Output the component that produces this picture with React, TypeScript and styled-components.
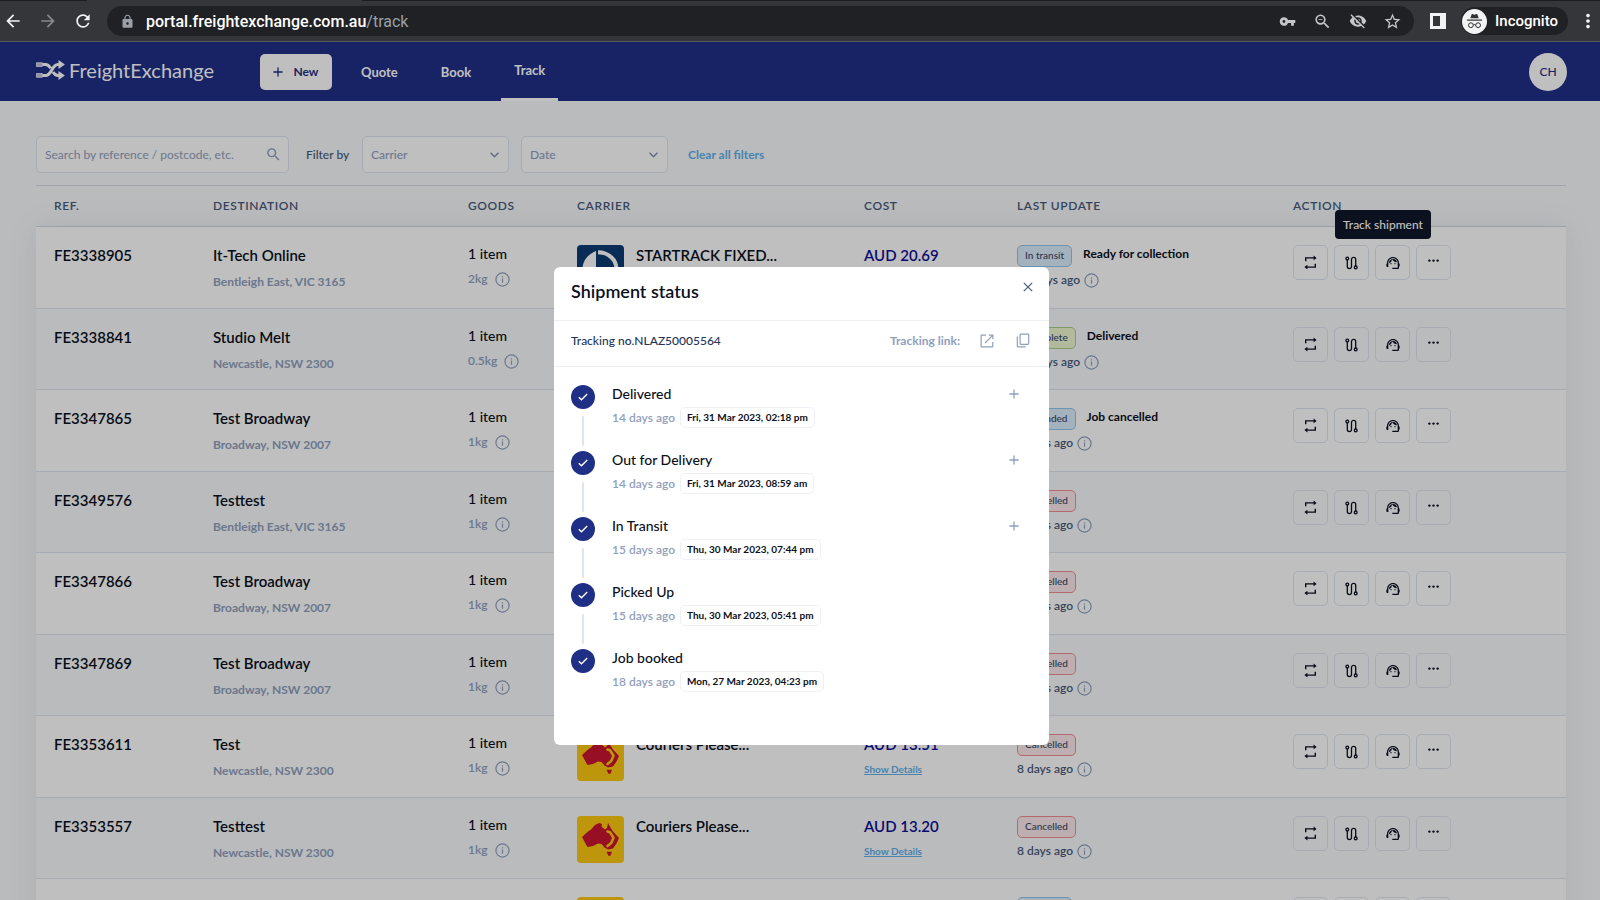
import React from "react";
import styled, { createGlobalStyle, css } from "styled-components";
import {
  MdArrowBack,
  MdArrowForward,
  MdRefresh,
  MdLock,
  MdVpnKey,
  MdZoomOut,
  MdVisibilityOff,
  MdStarBorder,
  MdMoreVert,
  MdSearch,
  MdSupportAgent,
} from "react-icons/md";

const ink = "#0b1020";
const slate = "#475a7a";
const muted = "#8fa0bd";
const line = "#dfe5ef";
const brand = "#1f2f86";
const sky = "#62b0ea";

const GlobalStyle = createGlobalStyle`
  *, *::before, *::after { box-sizing: border-box; }
  body { margin: 0; background: #f8fafc; font-family: Lato, "Liberation Sans", sans-serif; color: ${ink}; }
  button, input, select { font: inherit; color: inherit; }
  button { cursor: pointer; }
  h1, p, ol, dl { margin: 0; padding: 0; }
`;

const Window = styled.div`
  display: flex;
  flex-direction: column;
  height: 100vh;
  overflow: hidden;
`;

/* ---------- browser bar ---------- */

const BrowserBar = styled.header`
  flex: none;
  background: #35363a;
  border-bottom: 1px solid #55585b;
`;

const TabStrip = styled.div`
  height: 1px;
  padding-left: 87px;
  background: #1c1d20;
`;

const ActiveTab = styled.div`
  width: 275px;
  height: 1px;
  background: #35363a;
`;

const BrowserRow = styled.div`
  display: flex;
  align-items: center;
  height: 40px;
  padding-left: 3px;
  font-family: Roboto, "Liberation Sans", sans-serif;
`;

const BarButton = styled.button<{ $tone?: string; $w?: number }>`
  display: flex;
  align-items: center;
  justify-content: center;
  width: ${(p) => p.$w ?? 35}px;
  height: 28px;
  padding: 0;
  border: 0;
  background: none;
  color: ${(p) => p.$tone ?? "#f1f3f4"};
`;

const NavButtons = styled.div`
  display: flex;
  gap: 15px;
  padding-right: 14px;
`;

const Omnibox = styled.div`
  display: flex;
  flex: 1;
  align-items: center;
  height: 30px;
  padding: 0 4px 0 13px;
  border-radius: 15px;
  background: #202124;
  color: #9aa0a6;
`;

const Address = styled.input`
  flex: 1;
  min-width: 0;
  border: 0;
  outline: 0;
  background: none;
`;

const UrlText = styled.a`
  flex: 1;
  padding-left: 11px;
  font-size: 16px;
  color: #9aa0a6;
  text-decoration: none;
  b { font-weight: 500; color: #fff; }
`;

const IncognitoChip = styled.button`
  display: flex;
  align-items: center;
  gap: 8px;
  height: 28px;
  margin-right: 8px;
  padding: 0 10px 0 1px;
  border: 0;
  border-radius: 14px;
  background: #202124;
  color: #fff;
  font-size: 15px;
  font-weight: 500;
`;

/* ---------- portal ---------- */

const Portal = styled.div`
  position: relative;
  flex: 1;
  min-height: 0;
  overflow: hidden;
`;

const TopNav = styled.nav`
  display: flex;
  align-items: center;
  height: 59px;
  padding: 0 33px 0 36px;
  background: ${brand};
  color: #fff;
`;

const Logo = styled.a`
  display: flex;
  align-items: center;
  gap: 4px;
  width: 224px;
  padding-bottom: 4px;
  color: #fff;
  font-size: 20px;
  line-height: 24px;
  text-decoration: none;
`;

const NewButton = styled.button`
  display: flex;
  align-items: center;
  justify-content: center;
  gap: 10px;
  width: 72px;
  height: 36px;
  padding: 0;
  border: 0;
  border-radius: 5px;
  background: #fff;
  color: ${brand};
  font-size: 12px;
  font-weight: 700;
`;

const NavLinks = styled.div`
  display: flex;
  align-self: stretch;
  flex: 1;
  gap: 17px;
  padding-left: 16px;
`;

const NavLink = styled.a<{ $active?: boolean }>`
  display: flex;
  align-items: center;
  padding: 0 13px;
  color: #fff;
  font-size: 13px;
  font-weight: 700;
  text-decoration: none;
  ${(p) => p.$active && css`border-bottom: 3px solid #fff;`}
`;

const Avatar = styled.button`
  width: 38px;
  height: 38px;
  padding: 0;
  border: 0;
  border-radius: 50%;
  background: #fff;
  color: ${brand};
  font-size: 12px;
  font-weight: 500;
`;

const Page = styled.main`
  padding: 35px 34px 0 36px;
`;

const Filters = styled.form`
  display: flex;
  align-items: center;
  height: 37px;
  margin-bottom: 12px;
  font-size: 12px;
  font-weight: 500;
`;

const field = css`
  height: 37px;
  border: 1px solid ${line};
  border-radius: 5px;
  background: #fff;
  color: ${muted};
`;

const SearchField = styled.label`
  ${field}
  display: flex;
  align-items: center;
  width: 253px;
  padding: 0 6px 0 8px;
`;

const SearchInput = styled(Address)`
  padding: 0;
  font-weight: 400;
  &::placeholder { color: ${muted}; opacity: 1; }
`;

const FilterLabel = styled.label`
  width: 73px;
  padding-left: 17px;
  color: ${slate};
`;

const SelectWrap = styled.div`
  display: grid;
  align-items: center;
  width: 147px;
  margin-right: 12px;
  > * { grid-area: 1 / 1; }
  > svg { justify-self: end; margin-right: 10px; pointer-events: none; }
`;

const Select = styled.select`
  ${field}
  width: 100%;
  padding: 0 8px;
  appearance: none;
`;

const ClearButton = styled.button`
  padding: 0 8px;
  border: 0;
  background: none;
  color: ${sky};
  font-weight: 700;
`;

const Table = styled.table`
  width: 100%;
  table-layout: fixed;
  border-collapse: separate;
  border-spacing: 0;
`;

const HeadCell = styled.th`
  height: 42px;
  padding: 0 0 2px;
  border-top: 1px solid #d5dbe6;
  border-bottom: 1px solid #d5dbe6;
  color: ${slate};
  font-size: 12px;
  font-weight: 600;
  letter-spacing: 0.05em;
  text-align: left;
  &:first-child { padding-left: 18px; }
`;

const Body = styled.tbody`
  box-shadow: 0 0 30px rgba(30, 50, 90, 0.09);
`;

const Row = styled.tr`
  height: 82px;
  background: #fff;
  &:nth-child(even) { height: 81px; background: #f8fafc; }
`;

const Cell = styled.td`
  padding: 18px 0 0;
  border-bottom: 1px solid ${line};
  vertical-align: top;
  &:first-child { padding-left: 18px; }
`;

const Strong = styled.div<{ $tone?: string }>`
  color: ${(p) => p.$tone ?? ink};
  font-size: 15px;
  font-weight: 600;
  line-height: 21px;
`;

const Sub = styled.div`
  padding-top: 6px;
  color: ${muted};
  font-size: 12px;
  font-weight: 700;
  line-height: 20px;
`;

const ItemCount = styled.div`
  padding-bottom: 6px;
  font-size: 14px;
  font-weight: 500;
  line-height: 18px;
`;

const Meta = styled.div<{ $tone: string; $gap: number }>`
  display: flex;
  align-items: center;
  gap: ${(p) => p.$gap}px;
  color: ${(p) => p.$tone};
  font-size: 12px;
  font-weight: 600;
  line-height: 20px;
  svg { color: ${muted}; }
`;

const CarrierLine = styled.div`
  display: flex;
  gap: 12px;
`;

const DetailsLink = styled.a`
  display: inline-block;
  padding-top: 4px;
  color: ${sky};
  font-size: 10px;
  font-weight: 700;
  line-height: 20px;
`;

const tones = {
  blue: ["#dbeefc", "#90c4ee"],
  green: ["#eef7d2", "#a9cf8a"],
  red: ["#fdeaec", "#f08c90"],
};

type Tone = keyof typeof tones;

const StatusLine = styled.div`
  display: flex;
  gap: 11px;
  height: 22px;
  margin-bottom: 3px;
  font-size: 12px;
  font-weight: 700;
  line-height: 18px;
`;

const Badge = styled.span<{ $tone: Tone }>`
  height: 22px;
  padding: 0 7px;
  border: 1px solid ${(p) => tones[p.$tone][1]};
  border-radius: 5px;
  background: ${(p) => tones[p.$tone][0]};
  color: #3a4968;
  font-size: 10px;
  font-weight: 500;
  line-height: 19px;
`;

const Actions = styled.div`
  display: flex;
  gap: 6px;
`;

const ActionButton = styled.button`
  position: relative;
  display: flex;
  align-items: center;
  justify-content: center;
  width: 35px;
  height: 35px;
  padding: 0;
  border: 1px solid ${line};
  border-radius: 5px;
  background: none;
  color: ${ink};
`;

const Tooltip = styled.span`
  position: absolute;
  bottom: 40px;
  left: 0;
  padding: 0 8px;
  border-radius: 4px;
  background: #0f172a;
  color: #fff;
  font-size: 12px;
  font-weight: 500;
  line-height: 29px;
  white-space: nowrap;
`;

/* ---------- dialog ---------- */

const Overlay = styled.div`
  position: absolute;
  inset: 0;
  display: flex;
  align-items: flex-start;
  justify-content: center;
  padding: 225px 0 0 3px;
  background: rgba(0, 0, 0, 0.25);
`;

const Dialog = styled.section`
  width: 495px;
  padding-bottom: 30px;
  border-radius: 6px;
  background: #fff;
`;

const DialogHead = styled.div`
  display: flex;
  align-items: center;
  justify-content: space-between;
  height: 54px;
  padding: 0 12px 6px 17px;
  border-bottom: 1px solid #edf1f6;
`;

const DialogTitle = styled.h1`
  font-size: 18px;
  font-weight: 600;
  line-height: 24px;
`;

const IconButton = styled.button`
  display: flex;
  align-items: center;
  justify-content: center;
  width: 18px;
  height: 18px;
  padding: 0;
  border: 0;
  background: none;
  color: ${muted};
`;

const CloseButton = styled(IconButton)`
  align-self: flex-start;
  margin-top: 11px;
  color: ${slate};
`;

const TrackingLine = styled.div`
  display: flex;
  align-items: center;
  gap: 18px;
  height: 46px;
  padding: 0 17px 6px;
  border-bottom: 1px solid #edf1f6;
  color: ${muted};
  font-size: 12px;
  font-weight: 700;
`;

const TrackingNo = styled.p`
  flex: 1;
  color: #243456;
  font-weight: 500;
`;

const Steps = styled.ol`
  padding: 18px 26px 0 17px;
  list-style: none;
`;

const Step = styled.li`
  display: flex;
  height: 66px;
  gap: 17px;
`;

const Rail = styled.div`
  display: flex;
  flex-direction: column;
  align-items: center;
  gap: 7px;
  width: 24px;
`;

const Dot = styled.span`
  display: flex;
  align-items: center;
  justify-content: center;
  width: 24px;
  height: 24px;
  border-radius: 50%;
  background: ${brand};
  color: #fff;
`;

const Connector = styled.span`
  width: 2px;
  height: 30px;
  border-radius: 1px;
  background: #dfe4f0;
`;

const StepText = styled.div`
  flex: 1;
`;

const StepTitle = styled.p`
  font-size: 14px;
  font-weight: 500;
  line-height: 18px;
`;

const StepTime = styled.p`
  display: flex;
  align-items: center;
  gap: 5px;
  padding-top: 4px;
  color: ${muted};
  font-size: 12px;
  font-weight: 600;
`;

const Stamp = styled.time`
  padding: 0 6px;
  border: 1px solid #edf1f6;
  border-radius: 5px;
  color: ${ink};
  font-size: 10px;
  font-weight: 700;
  line-height: 19px;
`;

/* ---------- icons ---------- */

const InfoIcon = () => (
  <svg width="15" height="15" viewBox="0 0 15 15" fill="none" stroke="currentColor" aria-hidden="true">
    <circle cx="7.500" cy="7.500" r="6.600" strokeWidth="1.200" />
    <path d="M7.500 6.600V10.800M7.500 4.200v1.200" strokeWidth="1.200" />
  </svg>
);

const PlusIcon = ({ size }: { size: number }) => (
  <svg width={size} height={size} viewBox="0 0 10 10" fill="none" stroke="currentColor" strokeWidth="1.3" aria-hidden="true">
    <path d="M5 .4v9.2M.4 5h9.2" />
  </svg>
);

const Chevron = () => (
  <svg width="9" height="6" viewBox="0 0 9 6" fill="none" stroke="#8090ac" strokeWidth="1.4" aria-hidden="true">
    <path d="M.6.7 4.5 4.8 8.4.7" />
  </svg>
);

const SwapIcon = () => (
  <svg width="13" height="15" viewBox="0 0 13 15" fill="none" stroke="currentColor" strokeWidth="1.4" aria-hidden="true">
    <path d="M1.700 6.200V2.900H10M11.300 8.800v3.300H3" />
    <path d="M9.600.600 12.600 2.900 9.600 5.200ZM3.400 9.800.4 12.100 3.400 14.400Z" fill="currentColor" stroke="none" />
  </svg>
);

const RouteIcon = () => (
  <svg width="13" height="14" viewBox="0 0 13 14" fill="none" stroke="currentColor" strokeWidth="1.3" aria-hidden="true">
    <circle cx="2.3" cy="2.6" r="1.4" />
    <circle cx="10.7" cy="11.4" r="1.4" />
    <path d="M2.3 4v6.500a2.100 2.100 0 0 0 4.200 0V3.500a2.100 2.100 0 0 1 4.200 0v6.500" />
  </svg>
);

const DotsIcon = () => (
  <svg width="11" height="7" viewBox="0 0 11 7" fill="currentColor" aria-hidden="true">
    <circle cx="1.4" cy="1.6" r="1.2" />
    <circle cx="5.5" cy="1.6" r="1.2" />
    <circle cx="9.6" cy="1.6" r="1.2" />
  </svg>
);

const CheckIcon = () => (
  <svg width="10" height="8" viewBox="0 0 10 8" fill="none" stroke="currentColor" strokeWidth="1.4" aria-hidden="true">
    <path d="M.8 4.2 3.5 6.8 9.2 1" />
  </svg>
);

const CloseIcon = () => (
  <svg width="10" height="10" viewBox="0 0 10 10" fill="none" stroke="currentColor" strokeWidth="1.2" aria-hidden="true">
    <path d="m.8.8 8.4 8.4M9.2.8.8 9.2" />
  </svg>
);

const OpenIcon = () => (
  <svg width="14" height="14" viewBox="0 0 14 14" fill="none" stroke="currentColor" strokeWidth="1.2" aria-hidden="true">
    <path d="M6 1.2H1.6a.5.5 0 0 0-.5.5v10.7c0 .3.2.5.5.5h10.7c.3 0 .5-.2.5-.5V8" />
    <path d="M8.8 1.1h4.1v4.1M12.7 1.3 5 9" />
  </svg>
);

const CopyIcon = () => (
  <svg width="14" height="15" viewBox="0 0 14 15" fill="none" stroke="currentColor" strokeWidth="1.2" aria-hidden="true">
    <rect x="4.1" y="1.1" width="8.6" height="10.2" rx=".8" />
    <path d="M1.3 3.6v9.3c0 .6.4 1 1 1h7.4" />
  </svg>
);

const BrandMark = () => (
  <svg width="29" height="20" viewBox="0 0 29 20" fill="none" stroke="currentColor" aria-hidden="true">
    <path d="M.4 2.800h6v3.600h-6zM.4 13.600h6v3.600h-6z" fill="currentColor" fillOpacity=".7" strokeWidth=".8" />
    <path d="M6.500 4.500h3c2.600 0 3.800 1.600 5.200 3.800M17 12c1.200 2 2.600 3.500 5 3.500h2M6.500 15.500h3c6.600 0 6-11 12.500-11h2" strokeWidth="3" />
    <path d="M22.500 0 28.900 4.500 22.500 9ZM22.500 11 28.900 15.500 22.500 20Z" fill="currentColor" stroke="none" />
  </svg>
);

const SidePanelIcon = () => (
  <svg width="16" height="16" viewBox="0 0 16 16" aria-hidden="true">
    <path fill="#f1f3f4" fillRule="evenodd" d="M0 0h16v16H0zM3 3v10h7V3z" />
  </svg>
);

const IncognitoIcon = () => (
  <svg width="25" height="25" viewBox="0 0 25 25" aria-hidden="true">
    <circle cx="12.500" cy="12.500" r="12.500" fill="#f1f3f4" />
    <path d="M8.300 9.300 9.600 5.600c.2-.5.6-.6 1-.5l1.900.6 1.900-.6c.4-.1.900 0 1 .5l1.300 3.700Z" fill="#303134" />
    <path d="M5 11.100h15" stroke="#303134" strokeWidth="1.200" />
    <g fill="none" stroke="#303134" strokeWidth="1">
      <circle cx="8.900" cy="16.200" r="2.400" />
      <circle cx="16.100" cy="16.200" r="2.400" />
      <path d="M11.300 16c.8-.5 1.600-.5 2.400 0" />
    </g>
  </svg>
);

const StarTrackLogo = () => (
  <svg width="47" height="47" viewBox="0 0 47 47" role="img" aria-label="StarTrack">
    <rect width="47" height="47" rx="4" fill="#0d3b73" />
    <path d="M19 6v35C11 38 5.500 31 5.500 23.500S11 9 19 6Z" fill="#fff" />
    <path d="M21 7.300c11 0 18.300 8 18.300 16.200S32 39.700 21 39.700" fill="none" stroke="#fff" strokeWidth="4" />
  </svg>
);

const CouriersPleaseLogo = () => (
  <svg width="47" height="47" viewBox="0 0 47 47" role="img" aria-label="Couriers Please">
    <rect width="47" height="47" rx="4" fill="#fdc90f" />
    <path
      d="M5 21 11 15.500 14 13.500 18 9 22 7 25 8 24.500 10.500 28 13.500 30 12 31 7 33.500 11.500 36 15.500 42 22 39.500 27.500 36 32.500 31 33.500 27.500 31.500 24.500 28 21 27.500 16 30 10.500 31 8.500 27.500Z"
      fill="#c91430"
    />
    <path d="m30.500 15.500 2.500.8 3.500 5.500-2.300 5.200-3.700 3" fill="none" stroke="#fdc90f" strokeWidth="2.600" strokeLinecap="round" strokeLinejoin="round" />
    <path d="M29.500 35.800h5.500l-1.600 4h-2Z" fill="#c91430" />
  </svg>
);

/* ---------- data ---------- */

interface Shipment {
  ref: string;
  name: string;
  place: string;
  weight: string;
  carrier: string;
  cost: string;
  status: string;
  tone: Tone;
  note?: string;
  updated: string;
}

const couriers = "Couriers Please...";

const shipments: Shipment[] = [
  { ref: "FE3338905", name: "It-Tech Online", place: "Bentleigh East, VIC 3165", weight: "2kg", carrier: "STARTRACK FIXED...", cost: "20.69", status: "In transit", tone: "blue", note: "Ready for collection", updated: "14 days ago" },
  { ref: "FE3338841", name: "Studio Melt", place: "Newcastle, NSW 2300", weight: "0.5kg", carrier: couriers, cost: "13.20", status: "Complete", tone: "green", note: "Delivered", updated: "14 days ago" },
  { ref: "FE3347865", name: "Test Broadway", place: "Broadway, NSW 2007", weight: "1kg", carrier: couriers, cost: "13.20", status: "Amended", tone: "blue", note: "Job cancelled", updated: "9 days ago" },
  { ref: "FE3349576", name: "Testtest", place: "Bentleigh East, VIC 3165", weight: "1kg", carrier: couriers, cost: "13.20", status: "Cancelled", tone: "red", updated: "9 days ago" },
  { ref: "FE3347866", name: "Test Broadway", place: "Broadway, NSW 2007", weight: "1kg", carrier: couriers, cost: "13.20", status: "Cancelled", tone: "red", updated: "9 days ago" },
  { ref: "FE3347869", name: "Test Broadway", place: "Broadway, NSW 2007", weight: "1kg", carrier: couriers, cost: "13.20", status: "Cancelled", tone: "red", updated: "9 days ago" },
  { ref: "FE3353611", name: "Test", place: "Newcastle, NSW 2300", weight: "1kg", carrier: couriers, cost: "13.51", status: "Cancelled", tone: "red", updated: "8 days ago" },
  { ref: "FE3353557", name: "Testtest", place: "Newcastle, NSW 2300", weight: "1kg", carrier: couriers, cost: "13.20", status: "Cancelled", tone: "red", updated: "8 days ago" },
  { ref: "FE3353540", name: "Testtest", place: "Newcastle, NSW 2300", weight: "1kg", carrier: couriers, cost: "13.20", status: "In transit", tone: "blue", updated: "8 days ago" },
];

const steps = [
  { title: "Delivered", ago: "14 days ago", stamp: "Fri, 31 Mar 2023, 02:18 pm", more: true },
  { title: "Out for Delivery", ago: "14 days ago", stamp: "Fri, 31 Mar 2023, 08:59 am", more: true },
  { title: "In Transit", ago: "15 days ago", stamp: "Thu, 30 Mar 2023, 07:44 pm", more: true },
  { title: "Picked Up", ago: "15 days ago", stamp: "Thu, 30 Mar 2023, 05:41 pm", more: false },
  { title: "Job booked", ago: "18 days ago", stamp: "Mon, 27 Mar 2023, 04:23 pm", more: false },
];

const columns: [string, number | undefined][] = [
  ["REF.", 177],
  ["DESTINATION", 255],
  ["GOODS", 109],
  ["CARRIER", 287],
  ["COST", 153],
  ["LAST UPDATE", 276],
  ["ACTION", undefined],
];

const Column = styled.col<{ $w?: number }>`
  width: ${(p) => (p.$w ? `${p.$w}px` : "auto")};
`;

function ShipmentRow({ s, tip }: { s: Shipment; tip: boolean }) {
  return (
    <Row>
      <Cell><Strong>{s.ref}</Strong></Cell>
      <Cell>
        <Strong>{s.name}</Strong>
        <Sub>{s.place}</Sub>
      </Cell>
      <Cell>
        <ItemCount>1 item</ItemCount>
        <Meta $tone={muted} $gap={7}>{s.weight}<InfoIcon /></Meta>
      </Cell>
      <Cell>
        <CarrierLine>
          {s.carrier === couriers ? <CouriersPleaseLogo /> : <StarTrackLogo />}
          <Strong>{s.carrier}</Strong>
        </CarrierLine>
      </Cell>
      <Cell>
        <Strong $tone="#0f0f94">AUD {s.cost}</Strong>
        <DetailsLink href="#details">Show Details</DetailsLink>
      </Cell>
      <Cell>
        <StatusLine>
          <Badge $tone={s.tone}>{s.status}</Badge>
          {s.note}
        </StatusLine>
        <Meta $tone={slate} $gap={4}>{s.updated}<InfoIcon /></Meta>
      </Cell>
      <Cell>
        <Actions>
          <ActionButton aria-label="Rebook"><SwapIcon /></ActionButton>
          <ActionButton aria-label="Track shipment">
            <RouteIcon />
            {tip && <Tooltip role="tooltip">Track shipment</Tooltip>}
          </ActionButton>
          <ActionButton aria-label="Support"><MdSupportAgent size={16} /></ActionButton>
          <ActionButton aria-label="More"><DotsIcon /></ActionButton>
        </Actions>
      </Cell>
    </Row>
  );
}

export default function App() {
  return (
    <Window>
      <GlobalStyle />
      <BrowserBar>
        <TabStrip><ActiveTab /></TabStrip>
        <BrowserRow>
          <NavButtons>
            <BarButton $w={20} aria-label="Back"><MdArrowBack size={20} /></BarButton>
            <BarButton $w={20} $tone="#87898c" aria-label="Forward"><MdArrowForward size={20} /></BarButton>
            <BarButton $w={20} aria-label="Reload"><MdRefresh size={22} /></BarButton>
          </NavButtons>
          <Omnibox>
            <MdLock size={15} />
            <UrlText href="#track"><b>portal.freightexchange.com.au</b>/track</UrlText>
            <BarButton $tone="#c4c7ca" aria-label="Passwords"><MdVpnKey size={17} /></BarButton>
            <BarButton $tone="#c4c7ca" aria-label="Zoom"><MdZoomOut size={19} /></BarButton>
            <BarButton $tone="#c4c7ca" aria-label="Cookies blocked"><MdVisibilityOff size={18} /></BarButton>
            <BarButton $tone="#c4c7ca" aria-label="Bookmark"><MdStarBorder size={19} /></BarButton>
          </Omnibox>
          <BarButton $w={47} aria-label="Side panel"><SidePanelIcon /></BarButton>
          <IncognitoChip><IncognitoIcon />Incognito</IncognitoChip>
          <BarButton $w={24} aria-label="Menu"><MdMoreVert size={22} /></BarButton>
        </BrowserRow>
      </BrowserBar>

      <Portal>
        <TopNav>
          <Logo href="#home"><BrandMark />FreightExchange</Logo>
          <NewButton><PlusIcon size={10} />New</NewButton>
          <NavLinks>
            <NavLink href="#quote">Quote</NavLink>
            <NavLink href="#book">Book</NavLink>
            <NavLink href="#track" $active>Track</NavLink>
          </NavLinks>
          <Avatar>CH</Avatar>
        </TopNav>

        <Page>
          <Filters>
            <SearchField>
              <SearchInput aria-label="Search" placeholder="Search by reference / postcode, etc." />
              <MdSearch size={17} />
            </SearchField>
            <FilterLabel htmlFor="carrier">Filter by</FilterLabel>
            <SelectWrap>
              <Select id="carrier"><option>Carrier</option></Select>
              <Chevron />
            </SelectWrap>
            <SelectWrap>
              <Select aria-label="Date"><option>Date</option></Select>
              <Chevron />
            </SelectWrap>
            <ClearButton type="reset">Clear all filters</ClearButton>
          </Filters>

          <Table>
            <colgroup>
              {columns.map(([name, w]) => <Column key={name} $w={w} />)}
            </colgroup>
            <thead>
              <tr>{columns.map(([name]) => <HeadCell key={name}>{name}</HeadCell>)}</tr>
            </thead>
            <Body>
              {shipments.map((s, i) => <ShipmentRow key={s.ref} s={s} tip={i === 0} />)}
            </Body>
          </Table>
        </Page>

        <Overlay>
          <Dialog role="dialog" aria-modal="true" aria-labelledby="dialog-title">
            <DialogHead>
              <DialogTitle id="dialog-title">Shipment status</DialogTitle>
              <CloseButton aria-label="Close"><CloseIcon /></CloseButton>
            </DialogHead>
            <TrackingLine>
              <TrackingNo>Tracking no.NLAZ50005564</TrackingNo>
              <span>Tracking link:</span>
              <IconButton aria-label="Open link"><OpenIcon /></IconButton>
              <IconButton aria-label="Copy link"><CopyIcon /></IconButton>
            </TrackingLine>
            <Steps>
              {steps.map((step, i) => (
                <Step key={step.title}>
                  <Rail>
                    <Dot><CheckIcon /></Dot>
                    {i < steps.length - 1 && <Connector />}
                  </Rail>
                  <StepText>
                    <StepTitle>{step.title}</StepTitle>
                    <StepTime>{step.ago}<Stamp>{step.stamp}</Stamp></StepTime>
                  </StepText>
                  {step.more && <IconButton aria-label={`Expand ${step.title}`}><PlusIcon size={10} /></IconButton>}
                </Step>
              ))}
            </Steps>
          </Dialog>
        </Overlay>
      </Portal>
    </Window>
  );
}
